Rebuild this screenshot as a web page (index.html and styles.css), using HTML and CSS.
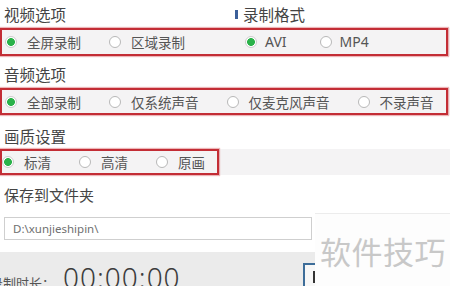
FILE: index.html
```html
<!DOCTYPE html>
<html lang="zh-CN">
<head>
    <meta charset="UTF-8">
    <meta name="viewport" content="width=device-width, initial-scale=1.0">
    <title>录制设置</title>
    <link rel="stylesheet" href="styles.css">
</head>
<body>
    <div class="page">
        <!-- 视频 + 格式 -->
        <div class="head head-video">
            <div class="title">视频选项</div>
            <div class="title title-mark"><span class="mark"></span>录制格式</div>
        </div>
        <div class="band">
            <div class="frame frame-video">
                <div class="group group-left">
                    <div class="opt"><span class="radio on"></span>全屏录制</div>
                    <div class="opt"><span class="radio"></span>区域录制</div>
                </div>
                <div class="group group-format">
                    <div class="opt opt-latin"><span class="radio on"></span>AVI</div>
                    <div class="opt opt-latin"><span class="radio"></span>MP4</div>
                </div>
            </div>
        </div>

        <!-- 音频 -->
        <div class="head head-audio">
            <div class="title">音频选项</div>
        </div>
        <div class="band">
            <div class="frame frame-audio">
                <div class="group group-left">
                    <div class="opt"><span class="radio on"></span>全部录制</div>
                    <div class="opt"><span class="radio"></span>仅系统声音</div>
                    <div class="opt"><span class="radio"></span>仅麦克风声音</div>
                    <div class="opt"><span class="radio"></span>不录声音</div>
                </div>
            </div>
        </div>

        <!-- 画质 -->
        <div class="head head-quality">
            <div class="title">画质设置</div>
        </div>
        <div class="band">
            <div class="frame frame-quality">
                <div class="group group-quality">
                    <div class="opt"><span class="radio on"></span>标清</div>
                    <div class="opt"><span class="radio"></span>高清</div>
                    <div class="opt"><span class="radio"></span>原画</div>
                </div>
            </div>
        </div>

        <!-- 保存路径 -->
        <div class="save-title">保存到文件夹</div>
        <div class="path-input">D:\xunjieshipin\</div>

        <div class="timer-bar">
            <div class="timer">
                <span class="timer-label">录制时长：</span>
                <span class="timer-value">00:00:00</span>
            </div>
            <div class="timer-btn"><span class="timer-btn-icon"></span></div>
        </div>

        <div class="watermark">软件技巧</div>
    </div>
</body>
</html>
```

FILE: styles.css
```css
* {
    margin: 0;
    padding: 0;
    box-sizing: border-box;
}

body {
    width: 450px;
    height: 286px;
    overflow: hidden;
    background: #ffffff;
    font-family: "Noto Sans CJK SC", "Noto Sans", sans-serif;
    color: #333;
}

.page {
    position: relative;
    width: 450px;
    height: 286px;
    overflow: hidden;
}

/* 标题行 */
.head {
    display: grid;
    grid-template-columns: 229px 1fr;
    align-items: center;
    padding-left: 4px;
}

.head-video {
    height: 28px;
}

.head-audio {
    height: 32px;
    padding-top: 4px;
}

.head-quality {
    height: 34px;
    padding-top: 8px;
}

.title {
    font-size: 15.5px;
    line-height: 20px;
    color: #444;
    display: flex;
    align-items: center;
}

.mark {
    display: inline-block;
    width: 3px;
    height: 9px;
    background: #3b5f99;
    margin-right: 5px;
    margin-left: 2px;
}

/* 选项行 */
.band {
    background: #f4f3f4;
}

.frame {
    border: 2px solid #c32d35;
    box-shadow: 0 0 1px 1px rgba(214, 90, 98, 0.45);
    display: flex;
    align-items: center;
}

.frame-video {
    width: 448px;
    height: 28px;
    display: grid;
    grid-template-columns: 240px 1fr;
}

.frame-audio {
    width: 448px;
    height: 27px;
}

.frame-quality {
    width: 219px;
    height: 26px;
}

.group {
    display: flex;
    align-items: center;
}

.group-left {
    padding-left: 3px;
}

.group-format {
    padding-left: 3px;
}

.group-quality {
    padding-left: 0;
}

.opt {
    display: flex;
    align-items: center;
    gap: 10px;
    margin-right: 28px;
    font-size: 13.5px;
    line-height: 18px;
    color: #555;
    white-space: nowrap;
}

.opt-latin {
    font-family: "Noto Sans", sans-serif;
    font-size: 14px;
    gap: 8px;
    margin-right: 33px;
}

.radio {
    flex: none;
    width: 12px;
    height: 12px;
    border-radius: 50%;
    border: 1px solid #b8b8b8;
    background: #ffffff;
}

.radio.on {
    border-color: #cccccc;
    background: radial-gradient(circle, #2bb24a 0, #2bb24a 3.6px, #ffffff 4.2px);
}

/* 保存 */
.save-title {
    height: 42px;
    padding: 10px 0 0 4px;
    font-size: 15px;
    line-height: 20px;
    color: #444;
}

.path-input {
    width: 308px;
    height: 23px;
    margin-left: 4px;
    border: 1px solid #cfcfcf;
    background: #ffffff;
    padding-left: 8px;
    font-family: "Noto Sans", sans-serif;
    font-size: 11.5px;
    line-height: 21px;
    color: #707070;
}

.timer-bar {
    margin-top: 12px;
    height: 40px;
    background: #ebebeb;
    display: grid;
    grid-template-columns: 303px 1fr;
}

.timer {
    display: flex;
    align-items: baseline;
    padding-top: 11px;
    margin-left: -10px;
}

.timer-label {
    font-size: 13px;
    color: #555;
    margin-right: 8px;
}

.timer-value {
    font-family: "Noto Sans", sans-serif;
    font-weight: 300;
    font-size: 28px;
    line-height: 28px;
    color: #3c3c3c;
    letter-spacing: 1px;
}

.timer-btn {
    margin-top: 11px;
    width: 40px;
    height: 30px;
    border: 2px solid #3d6d99;
    background: #f7f7f7;
    padding: 6px 0 0 8px;
}

.timer-btn-icon {
    display: block;
    width: 2px;
    height: 12px;
    background: #333;
}

/* 水印 */
.watermark {
    position: absolute;
    left: 315px;
    top: 213px;
    right: 0;
    bottom: 0;
    background: #fdfdfd;
    border-top: 1px solid #ececec;
    padding: 20px 0 0 5px;
    font-size: 31px;
    line-height: 34px;
    color: #c8c8c8;
    letter-spacing: 0.5px;
}
```
